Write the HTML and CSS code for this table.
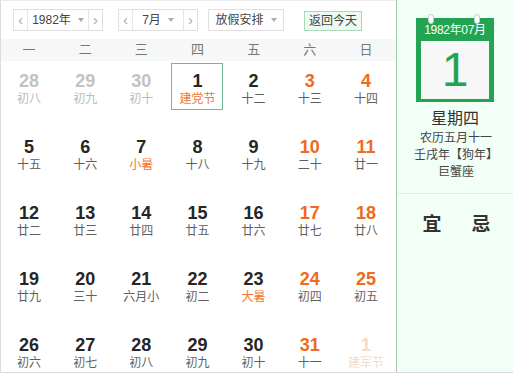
FILE: index.html
```html
<!DOCTYPE html>
<html lang="zh">
<head>
<meta charset="utf-8">
<title>万年历</title>
<link rel="stylesheet" href="styles.css">
</head>
<body>
<div class="widget">
  <div class="main">
    <div class="toolbar">
      <div class="select">
        <span class="arrow">&lsaquo;</span>
        <span class="value">1982年<i class="caret"></i></span>
        <span class="arrow right">&rsaquo;</span>
      </div>
      <div class="select month">
        <span class="arrow">&lsaquo;</span>
        <span class="value">7月<i class="caret"></i></span>
        <span class="arrow right">&rsaquo;</span>
      </div>
      <div class="select holiday">
        <span class="value">放假安排<i class="caret"></i></span>
      </div>
      <div class="today-btn">返回今天</div>
    </div>
    <div class="weekdays">
      <span>一</span><span>二</span><span>三</span><span>四</span><span>五</span><span>六</span><span>日</span>
    </div>
    <div class="grid">
      <div class="cell other"><b>28</b><small>初八</small></div>
      <div class="cell other"><b>29</b><small>初九</small></div>
      <div class="cell other"><b>30</b><small>初十</small></div>
      <div class="cell today"><b>1</b><small class="fest">建党节</small></div>
      <div class="cell"><b>2</b><small>十二</small></div>
      <div class="cell wk"><b>3</b><small>十三</small></div>
      <div class="cell wk"><b>4</b><small>十四</small></div>

      <div class="cell"><b>5</b><small>十五</small></div>
      <div class="cell"><b>6</b><small>十六</small></div>
      <div class="cell"><b>7</b><small class="fest">小暑</small></div>
      <div class="cell"><b>8</b><small>十八</small></div>
      <div class="cell"><b>9</b><small>十九</small></div>
      <div class="cell wk"><b>10</b><small>二十</small></div>
      <div class="cell wk"><b>11</b><small>廿一</small></div>

      <div class="cell"><b>12</b><small>廿二</small></div>
      <div class="cell"><b>13</b><small>廿三</small></div>
      <div class="cell"><b>14</b><small>廿四</small></div>
      <div class="cell"><b>15</b><small>廿五</small></div>
      <div class="cell"><b>16</b><small>廿六</small></div>
      <div class="cell wk"><b>17</b><small>廿七</small></div>
      <div class="cell wk"><b>18</b><small>廿八</small></div>

      <div class="cell"><b>19</b><small>廿九</small></div>
      <div class="cell"><b>20</b><small>三十</small></div>
      <div class="cell"><b>21</b><small>六月小</small></div>
      <div class="cell"><b>22</b><small>初二</small></div>
      <div class="cell"><b>23</b><small class="fest">大暑</small></div>
      <div class="cell wk"><b>24</b><small>初四</small></div>
      <div class="cell wk"><b>25</b><small>初五</small></div>

      <div class="cell"><b>26</b><small>初六</small></div>
      <div class="cell"><b>27</b><small>初七</small></div>
      <div class="cell"><b>28</b><small>初八</small></div>
      <div class="cell"><b>29</b><small>初九</small></div>
      <div class="cell"><b>30</b><small>初十</small></div>
      <div class="cell wk"><b>31</b><small>十一</small></div>
      <div class="cell next"><b>1</b><small>建军节</small></div>
    </div>
  </div>
  <div class="side">
    <div class="cal-icon">
      <span class="ring r1"></span><span class="ring r2"></span>
      <div class="cal-head">1982年07月</div>
      <div class="cal-body">1</div>
    </div>
    <div class="week">星期四</div>
    <div class="lunar">农历五月十一</div>
    <div class="lunar">壬戌年【狗年】</div>
    <div class="lunar">巨蟹座</div>
    <div class="yiji"><span>宜</span><span>忌</span></div>
  </div>
</div>
</body>
</html>
```
FILE: styles.css
```css
* { box-sizing: border-box; }
html, body { margin: 0; padding: 0; background: #fff; }
body {
  font-family: "Liberation Sans", "Noto Sans CJK SC", sans-serif;
  color: #333;
  width: 513px;
  height: 375px;
  overflow: hidden;
}
.widget {
  display: flex;
  height: 373px;
  border-bottom: 1px solid #d8d8d8;
}
.main {
  width: 396px;
  border-left: 1px solid #dcdcdc;
  border-top: 1px solid #ececec;
  display: flex;
  flex-direction: column;
  overflow: hidden;
}
.toolbar {
  flex-shrink: 0;
  height: 38px;
  display: flex;
  align-items: flex-start;
  padding: 8px 0 0 12px;
}
.select {
  display: flex;
  height: 22px;
  border: 1px solid #e0e0e0;
  font-size: 12px;
  line-height: 20px;
  color: #444;
  width: 90px;
  margin-right: 15px;
}
.select.month { width: 80px; margin-right: 10px; }
.select.holiday { width: 76px; margin-right: 20px; }
.arrow {
  width: 14px;
  text-align: center;
  color: #aaa;
  font-size: 15px;
  border-right: 1px solid #e6e6e6;
  line-height: 19px;
}
.arrow.right { border-right: 0; border-left: 1px solid #e6e6e6; }
.value {
  flex: 1;
  display: flex;
  justify-content: center;
  align-items: center;
  gap: 7px;
}
.caret {
  width: 0; height: 0;
  border-left: 3px solid transparent;
  border-right: 3px solid transparent;
  border-top: 4px solid #aaa;
}
.today-btn {
  margin-top: 2px;
  height: 20px;
  padding: 0 4px;
  border: 1px solid #a8d9b8;
  background: #eef9f1;
  font-size: 12px;
  line-height: 18px;
  color: #444;
}
.weekdays {
  flex-shrink: 0;
  height: 22px;
  background: #f5f8f7;
  display: grid;
  grid-template-columns: repeat(7, 1fr);
  font-size: 13px;
  line-height: 22px;
  color: #777;
  text-align: center;
  padding-right: 2px;
}
.grid {
  flex-shrink: 0;
  display: grid;
  grid-template-columns: repeat(7, 1fr);
  grid-auto-rows: 66px;
  padding-right: 2px;
}
.cell {
  display: flex;
  flex-direction: column;
  align-items: center;
  justify-content: flex-start;
  width: 52px;
  height: 47px;
  margin: 2px auto 0;
  padding-top: 7px;
  border: 1px solid transparent;
}
.cell b {
  font-size: 18px;
  line-height: 20px;
  font-weight: bold;
  color: #262626;
}
.cell small {
  font-size: 12px;
  line-height: 16px;
  color: #5f5f5f;
}
.cell small.fest { color: #f0782e; }
.cell.wk b { color: #ee6a22; }
.cell.other b, .cell.other small { color: #bbb; font-weight: normal; }
.cell.other b { font-weight: bold; color: #c2c2c2; }
.cell.next b, .cell.next small { color: #f9d9c6; }
.cell.today { border-color: #6dbb92; }

.side {
  flex: 1;
  background: #f2fff7;
  border-left: 1px solid #a6c9b2;
  display: flex;
  flex-direction: column;
  align-items: center;
  padding-top: 18px;
}
.cal-icon {
  position: relative;
  width: 78px;
  background: #23a452;
  padding: 0 5px 3px;
}
.ring {
  position: absolute;
  top: -4px;
  width: 6px;
  height: 10px;
  border-radius: 3px;
  background: #fff;
  border: 1px solid #c8c8c8;
}
.r1 { left: 12px; }
.r2 { right: 14px; }
.cal-head {
  height: 23px;
  color: #fff;
  font-size: 12px;
  line-height: 25px;
  text-align: center;
  letter-spacing: -0.3px;
}
.cal-body {
  height: 58px;
  background: #f6f7f6;
  color: #23a452;
  font-size: 48px;
  line-height: 58px;
  text-align: center;
}
.week {
  margin-top: 6px;
  font-size: 16px;
  line-height: 22px;
  color: #333;
}
.lunar {
  font-size: 12px;
  line-height: 17px;
  color: #444;
  padding-left: 2px;
}
.yiji {
  margin-top: 12px;
  align-self: stretch;
  border-top: 1px solid #dfeee5;
  display: flex;
  justify-content: center;
  gap: 30px;
  padding: 15px 0 0 3px;
  font-size: 19px;
  font-weight: bold;
  color: #333;
}
```
